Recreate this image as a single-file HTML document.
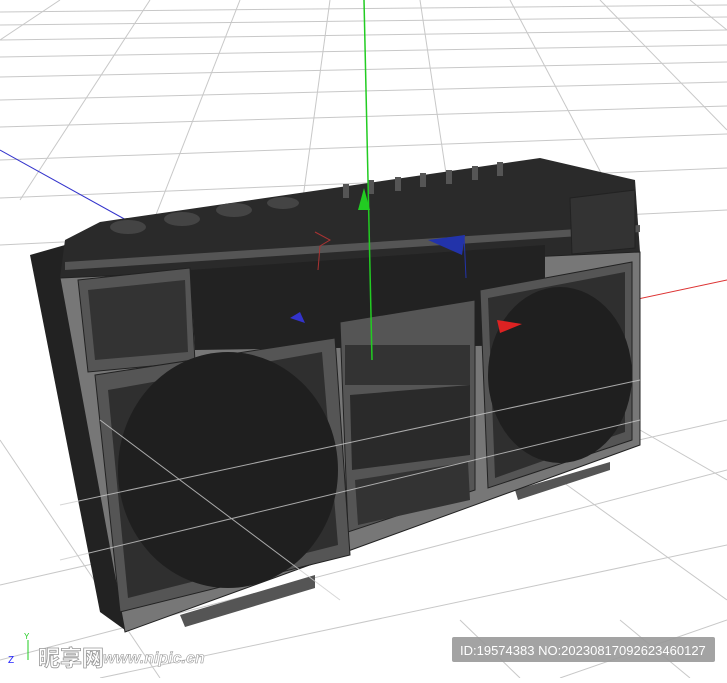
<!DOCTYPE html><html><head><style>body{margin:0;width:727px;height:678px;overflow:hidden;background:#fff;font-family:"Liberation Sans","Noto Sans CJK SC",sans-serif}
</style></head><body>
<svg width="727" height="678" viewBox="0 0 727 678" xmlns="http://www.w3.org/2000/svg">
<g stroke="#c8c8c8" stroke-width="1">
<line x1="0" y1="12" x2="727" y2="5"/><line x1="0" y1="25" x2="727" y2="17"/><line x1="0" y1="40" x2="727" y2="30"/><line x1="0" y1="57" x2="727" y2="45"/><line x1="0" y1="77" x2="727" y2="62"/><line x1="0" y1="100" x2="727" y2="82"/><line x1="0" y1="127" x2="727" y2="106"/><line x1="0" y1="160" x2="727" y2="134"/><line x1="0" y1="198" x2="727" y2="168"/><line x1="0" y1="245" x2="727" y2="210"/>
<line x1="60" y1="0" x2="0" y2="40"/><line x1="150" y1="0" x2="20" y2="200"/><line x1="240" y1="0" x2="150" y2="230"/><line x1="330" y1="0" x2="300" y2="220"/><line x1="420" y1="0" x2="450" y2="200"/><line x1="510" y1="0" x2="610" y2="190"/><line x1="600" y1="0" x2="727" y2="130"/><line x1="690" y1="0" x2="727" y2="30"/>
<line x1="0" y1="660" x2="727" y2="470"/><line x1="0" y1="585" x2="727" y2="420"/><line x1="100" y1="678" x2="727" y2="545"/><line x1="560" y1="678" x2="727" y2="620"/>
<line x1="460" y1="620" x2="520" y2="678"/><line x1="560" y1="480" x2="727" y2="600"/><line x1="0" y1="440" x2="160" y2="678"/><line x1="640" y1="430" x2="727" y2="480"/><line x1="620" y1="620" x2="690" y2="678"/>
</g>
<line x1="0" y1="150" x2="375" y2="358" stroke="#3333cc" stroke-width="1"/>
<line x1="375" y1="355" x2="727" y2="280" stroke="#dd3333" stroke-width="1"/>
<polygon points="180,615 315,575 315,588 185,627" fill="#555"/>
<polygon points="515,490 610,462 610,470 518,500" fill="#555"/>
<polygon points="30,255 65,245 125,630 100,612" fill="#222"/>
<polygon points="65,240 100,222 540,158 635,180 640,252 60,278" fill="#2a2a2a"/>
<g fill="#444"><ellipse cx="128" cy="227" rx="18" ry="7"/><ellipse cx="182" cy="219" rx="18" ry="7"/><ellipse cx="234" cy="210" rx="18" ry="7"/><ellipse cx="283" cy="203" rx="16" ry="6"/></g>
<g fill="#555"><rect x="343" y="184" width="6" height="14"/><rect x="368" y="180" width="6" height="14"/><rect x="395" y="177" width="6" height="14"/><rect x="420" y="173" width="6" height="14"/><rect x="446" y="170" width="6" height="14"/><rect x="472" y="166" width="6" height="14"/><rect x="497" y="162" width="6" height="14"/></g>
<polygon points="65,262 640,225 640,232 65,270" fill="#555"/>
<polygon points="60,278 640,252 640,445 125,632" fill="#777" stroke="#222"/>
<polygon points="190,270 545,245 545,345 195,350" fill="#222"/>
<polygon points="78,280 190,268 195,362 88,372" fill="#555" stroke="#222"/>
<polygon points="88,290 185,280 188,352 95,360" fill="#333"/>
<polygon points="570,198 635,190 635,248 572,254" fill="#333" stroke="#222"/>
<polygon points="340,322 475,300 475,490 348,532" fill="#555" stroke="#222"/>
<rect x="345" y="345" width="125" height="40" fill="#333"/>
<polygon points="350,395 470,385 470,455 352,470" fill="#2a2a2a"/>
<polygon points="355,480 468,462 470,500 358,525" fill="#333"/>
<polygon points="95,375 335,338 350,555 120,612" fill="#555" stroke="#222"/>
<polygon points="108,390 322,352 338,545 128,598" fill="#2f2f2f"/>
<ellipse cx="228" cy="470" rx="110" ry="118" fill="#1f1f1f"/>
<polygon points="480,290 632,262 632,440 488,488" fill="#555" stroke="#222"/>
<polygon points="488,298 625,272 625,432 495,478" fill="#2f2f2f"/>
<ellipse cx="560" cy="375" rx="72" ry="88" fill="#1f1f1f"/>
<g stroke="#ccc" stroke-width="1" opacity="0.8"><line x1="60" y1="560" x2="640" y2="420"/><line x1="60" y1="505" x2="640" y2="380"/><line x1="100" y1="420" x2="340" y2="600"/></g>
<line x1="364" y1="0" x2="372" y2="360" stroke="#22cc22" stroke-width="1.5"/>
<polygon points="358,210 364,188 370,210" fill="#22cc22"/>
<polygon points="497,320 522,324 500,333" fill="#dd2222"/>
<polygon points="290,318 300,312 305,323" fill="#3333cc"/>
<path d="M315,232 L330,240 L320,246 L318,270" stroke="#aa3333" fill="none"/>
<polygon points="428,240 465,235 462,255" fill="#2233aa"/>
<line x1="464" y1="235" x2="466" y2="278" stroke="#2233aa"/>
<line x1="28" y1="640" x2="28" y2="660" stroke="#22cc22"/><text x="24" y="639" font-size="8" fill="#22cc22">Y</text>
<text x="8" y="663" font-size="10" fill="#22f">Z</text>
<text x="38" y="666" font-size="22" font-weight="bold" fill="#fff" stroke="#999" stroke-width="0.8">昵享网</text>
<text x="103" y="663" font-size="16" font-style="italic" font-weight="bold" fill="#fff" stroke="#999" stroke-width="0.6">www.nipic.cn</text>
<rect x="452" y="637" width="263" height="25" rx="2" fill="#999" opacity="0.9"/>
<text x="460" y="655" font-size="13" fill="#fff">ID:19574383 NO:20230817092623460127</text>
</svg></body></html>
